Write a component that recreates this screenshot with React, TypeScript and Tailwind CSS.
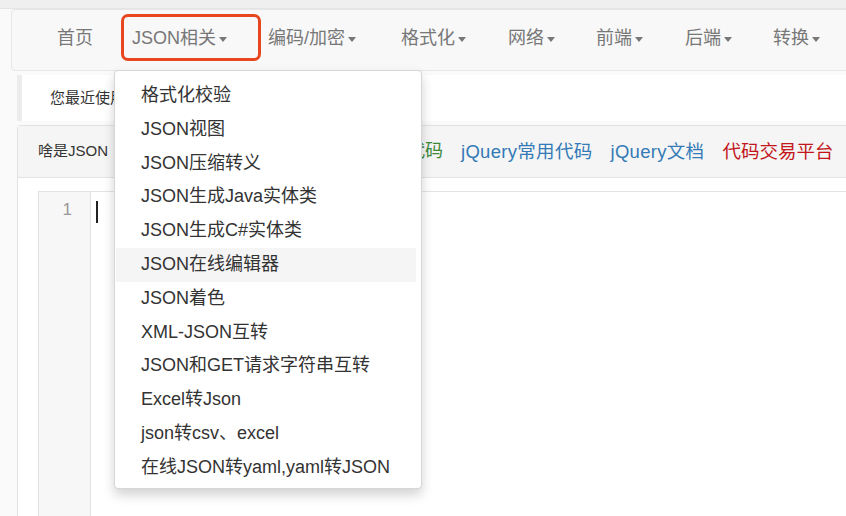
// App.tsx
const NAV = [
  { label: '首页', w: 'w-[75px]', caret: false },
  { label: 'JSON相关', w: 'w-[136px]', caret: true },
  { label: '编码/加密', w: 'w-[133px]', caret: true },
  { label: '格式化', w: 'w-[107px]', caret: true },
  { label: '网络', w: 'w-[88px]', caret: true },
  { label: '前端', w: 'w-[89px]', caret: true },
  { label: '后端', w: 'w-[88px]', caret: true },
  { label: '转换', w: 'w-[80px]', caret: true },
]

const MENU = [
  '格式化校验',
  'JSON视图',
  'JSON压缩转义',
  'JSON生成Java实体类',
  'JSON生成C#实体类',
  'JSON在线编辑器',
  'JSON着色',
  'XML-JSON互转',
  'JSON和GET请求字符串互转',
  'Excel转Json',
  'json转csv、excel',
  '在线JSON转yaml,yaml转JSON',
]

function Caret() {
  return (
    <span className="ml-[3px] mt-[3px] inline-block h-0 w-0 border-x-[4px] border-t-[5px] border-x-transparent border-t-[#777]" />
  )
}

export default function App() {
  return (
    <div
      className="relative h-[516px] w-[846px] overflow-hidden bg-[#fafafa]"
      style={{ fontFamily: '"Liberation Sans", "Noto Sans CJK SC", sans-serif' }}
    >
      {/* browser strip */}
      <div className="h-[9px] border-b border-[#e4e4e4] bg-[#efefef]" />

      {/* navbar */}
      <nav className="ml-[11px] flex h-[62px] items-center rounded-l-[4px] border border-r-0 border-[#e7e7e7] bg-[#f8f8f8] pb-[4px] pl-[45px] text-[18px] text-[#777]">
        {NAV.map((n) => (
          <span key={n.label} className={`flex shrink-0 items-center ${n.w}`}>
            {n.label}
            {n.caret && <Caret />}
          </span>
        ))}
      </nav>

      {/* recent bar */}
      <div className="ml-[17px] mt-[4px] flex h-[46px] items-center border-l-[5px] border-[#ececec] bg-white pl-[28px] text-[15px] text-[#333]">
        您最近使用
      </div>

      {/* panel */}
      <div className="ml-[17px] mt-[4px] h-[400px] rounded-tl-[4px] border-l border-t border-[#e3e3e3] bg-white">
        <div className="flex h-[52px] items-center border-b border-[#e3e3e3] bg-[#f5f5f5] pl-[20px]">
          <div className="flex w-[423px] shrink-0 items-center justify-between pr-[18px]">
            <span className="text-[15px] text-[#333]">啥是JSON</span>
            <span className="text-[18px] text-[#3a8a3a]">在线运行代码</span>
          </div>
          <div className="flex items-center gap-[18px] text-[18.5px]">
            <span className="tracking-[0.3px] text-[#337ab7]">jQuery常用代码</span>
            <span className="tracking-[0.3px] text-[#337ab7]">jQuery文档</span>
            <span className="text-[#c3151b]">代码交易平台</span>
          </div>
        </div>

        <div className="pl-[20px] pt-[13px]">
          <div className="flex h-[340px] border-l border-t border-[#e3e3e3]">
            <div className="w-[52px] shrink-0 border-r border-[#e3e3e3] bg-[#f7f7f7] pr-[18px] pt-[5px] text-right text-[17px] leading-[26px] text-[#999]">
              1
            </div>
            <div className="pl-[5px] pt-[9px]">
              <div className="h-[22px] w-[2px] bg-[#222]" />
            </div>
          </div>
        </div>
      </div>

      {/* annotation box */}
      <div className="absolute left-[121px] top-[14px] h-[47px] w-[140px] rounded-[7px] border-[3px] border-[#e8461e]" />

      {/* dropdown menu */}
      <ul className="absolute left-[114px] top-[70px] w-[308px] rounded-[4px] border border-[#d6d6d6] bg-white pb-[3px] pt-[8px] text-[18px] text-[#333] shadow-[0_6px_12px_rgba(0,0,0,0.175)]">
        {MENU.map((m) => (
          <li
            key={m}
            className={`ml-[1px] mr-[5px] h-[33.8px] pl-[25px] leading-[33.8px] whitespace-nowrap ${
              m === 'JSON在线编辑器' ? 'bg-[#f5f5f5]' : ''
            }`}
          >
            {m}
          </li>
        ))}
      </ul>
    </div>
  )
}
